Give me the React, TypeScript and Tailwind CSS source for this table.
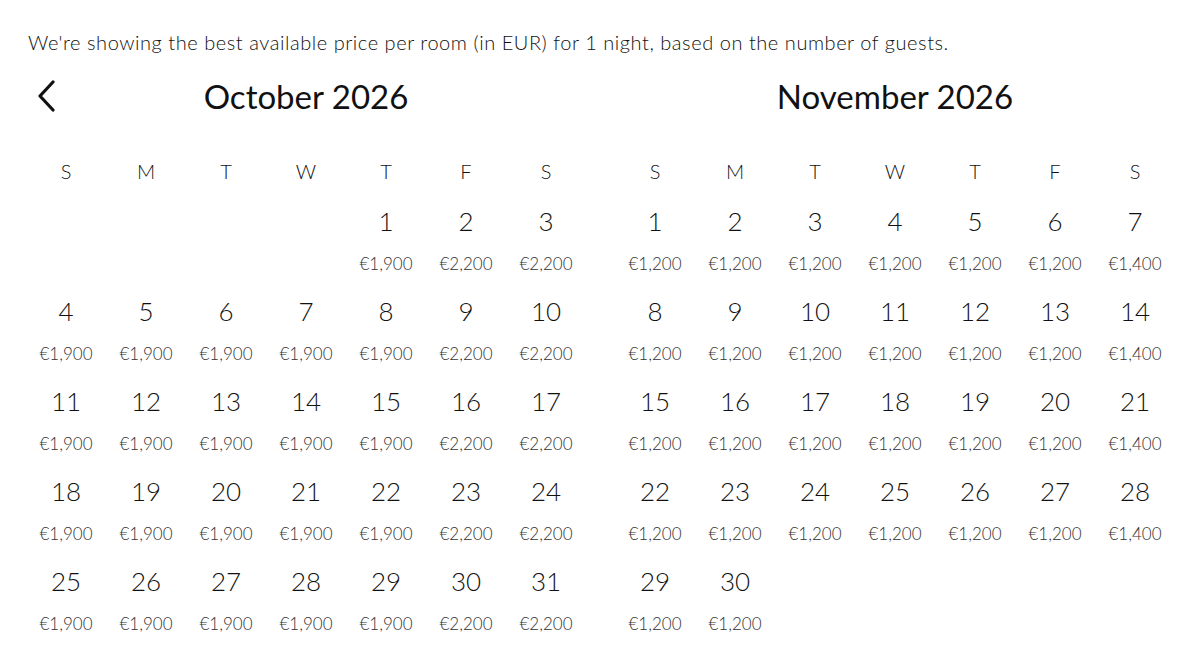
const WEEKDAYS = ['S', 'M', 'T', 'W', 'T', 'F', 'S']

type Month = {
    title: string
    offset: number
    days: number
    price: (day: number, col: number) => string
}

const months: Month[] = [
    {
        title: 'October 2026',
        offset: 4,
        days: 31,
        price: (_d, col) => (col === 5 || col === 6 ? '€2,200' : '€1,900'),
    },
    {
        title: 'November 2026',
        offset: 0,
        days: 30,
        price: (_d, col) => (col === 6 ? '€1,400' : '€1,200'),
    },
]

function MonthGrid({ month, showBack }: { month: Month; showBack: boolean }) {
    const cells: (number | null)[] = []
    for (let i = 0; i < month.offset; i++) cells.push(null)
    for (let d = 1; d <= month.days; d++) cells.push(d)

    return (
        <div className="w-[560px]">
            <div className="grid grid-cols-[1fr_auto_1fr] items-center h-[50px]">
                <div className="pl-[10px]">
                    {showBack && (
                        <svg width="20" height="32" viewBox="0 0 20 32" fill="none">
                            <path d="M17 2 L4 16 L17 30" stroke="#111" strokeWidth="3.2" strokeLinecap="round" strokeLinejoin="round" />
                        </svg>
                    )}
                </div>
                <h2 className="text-[33px] leading-[50px] text-[#111]">{month.title}</h2>
                <div />
            </div>

            <div className="grid grid-cols-7 mt-[30px] h-[40px] items-center">
                {WEEKDAYS.map((w, i) => (
                    <div key={i} className="text-center text-[20px] font-light text-[#111]">{w}</div>
                ))}
            </div>

            <div className="grid grid-cols-7">
                {cells.map((d, i) => (
                    <div key={i} className="h-[90px] flex flex-col items-center">
                        {d !== null && (
                            <>
                                <span className="leading-[60px] text-[26px] font-light text-[#111]">{d}</span>
                                <span className="leading-[26px] text-[17px] font-light text-[#333]">{month.price(d, i % 7)}</span>
                            </>
                        )}
                    </div>
                ))}
            </div>
        </div>
    )
}

export default function App() {
    return (
        <div className="w-[1200px] h-[661px] bg-white overflow-hidden font-['Lato','Liberation_Sans',sans-serif]">
            <p className="pt-[28px] pl-[28px] text-[20px] tracking-[0.55px] leading-[28px] font-light text-[#111]">
                We're showing the best available price per room (in EUR) for 1 night, based on the number of guests.
            </p>
            <div className="flex gap-[29px] pl-[26px] mt-[15px]">
                {months.map((m, i) => (
                    <MonthGrid key={m.title} month={m} showBack={i === 0} />
                ))}
            </div>
        </div>
    )
}
